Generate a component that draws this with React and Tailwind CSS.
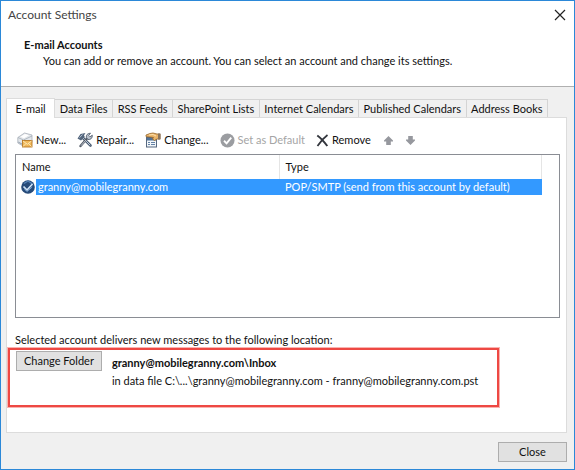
const TABS = [
  "E-mail",
  "Data Files",
  "RSS Feeds",
  "SharePoint Lists",
  "Internet Calendars",
  "Published Calendars",
  "Address Books",
];

function NewIcon() {
  return (
    <svg width="16" height="16" viewBox="0 0 16 16" aria-hidden="true">
      <path d="M.8 5.500 7.500 1l7.500 2v7.500L6 14 .8 11z" fill="#e3e6ea" stroke="#a9b0b9" strokeWidth=".8" />
      <path d="m1 5.500 5.500 2.500L15 4" fill="none" stroke="#a3adb8" strokeWidth=".8" />
      <path d="m3.500 4.700 4.500-2.700 4 1.200-5 3z" fill="#fff" />
      <path d="m1.300 9.500 4.200 2.200V13l-4.200-2.200z" fill="#9aa6b4" />
      <rect x="5.500" y="8.500" width="9.500" height="6.500" fill="#f0b95b" stroke="#b87925" strokeWidth=".9" />
      <path d="m6 9 4.300 3.300L14.500 9M6 14.500l3-3M14.500 14.500l-3-3" fill="none" stroke="#fff1c9" strokeWidth=".8" />
    </svg>
  );
}

function RepairIcon() {
  return (
    <svg width="16" height="16" viewBox="0 0 16 16" aria-hidden="true">
      <path d="m5 5 8.500 8.500" stroke="#4b5d73" strokeWidth="2.600" strokeLinecap="round" />
      <path d="m5.500 5.500 7.700 7.700" stroke="#c3cddb" strokeWidth="1" />
      <path d="M.5 6.500 3.500 2l5-1-1.500 2.200.8 1.800L4 8.500z" fill="#53657c" />
      <path d="m2.500 5.700 3-3.200" stroke="#b7c5d6" />
      <path d="M10.500 6 3.500 14" stroke="#525a66" strokeWidth="2.400" strokeLinecap="round" />
      <path d="M9 8 4 13.700" stroke="#cdd3dc" strokeWidth=".9" />
      <path d="M9.300 5.500C9 3 10.500 1.200 13.500 1.200L11.700 3.400l1.300 1.400 2.300-1.600c.3 2.800-1.700 4.800-4.300 4.300z" fill="#b8c1cd" stroke="#566172" strokeWidth=".9" />
    </svg>
  );
}

function ChangeIcon() {
  return (
    <svg width="16" height="16" viewBox="0 0 16 16" aria-hidden="true">
      <rect x="1.500" y="5.500" width="10" height="9.500" fill="#f2f6fa" stroke="#55677f" />
      <path d="M2 6h9v2.500H2z" fill="#4f7197" />
      <path d="M3 10.500h2M3 12.500h2M6 10.500h4M6 12.500h4" stroke="#6482a5" />
      <path d="m1 3 4-1.500 3-.5 4 1h3v5h-3L9.500 8.500 7.500 7l1-1.500L5 5l-4-.5z" fill="#e9b46a" stroke="#98672b" strokeWidth=".8" />
      <path d="m4 3 4-.5 3 1.500" fill="none" stroke="#ffe1ac" />
      <path d="M13 1.500h2.500v6H13z" fill="#88735d" />
    </svg>
  );
}

function CheckBadge() {
  return (
    <svg width="15" height="15" viewBox="0 0 16 16" aria-hidden="true">
      <circle cx="8" cy="8" r="7.500" fill="#9b9da1" />
      <path d="m4.300 8.300 2.700 2.700 5-6" fill="none" stroke="#fff" strokeWidth="2" />
    </svg>
  );
}

function AccountIcon() {
  return (
    <svg width="14" height="14" viewBox="0 0 14 14" className="block" aria-hidden="true">
      <circle cx="7" cy="7" r="6.800" fill="#274b79" />
      <path d="M3 3.500 7 1l4.500 3" fill="none" stroke="#5784b8" strokeWidth="1.200" />
      <path d="m2.500 6.500 3.500 3.500 5.500-6" fill="none" stroke="#cfe2f6" strokeWidth="1.700" />
      <path d="m3.500 9.500 2.700 2 5-4.500" fill="none" stroke="#6f9bcb" strokeWidth="1" />
    </svg>
  );
}

function RemoveIcon() {
  return (
    <svg width="13" height="13" viewBox="0 0 12 13" aria-hidden="true">
      <path d="M.8 1.500c3.500 2.500 7 6.500 10 10.500" fill="none" stroke="#33363d" strokeWidth="2" />
      <path d="M11 1C7 4 4 7.500 1 12" fill="none" stroke="#33363d" strokeWidth="1.700" />
    </svg>
  );
}

function ArrowIcon({ down }) {
  return (
    <svg width="9" height="9" viewBox="0 0 9 9" className={down ? "block rotate-180" : "block"} aria-hidden="true">
      <path d="M4.500 0 9 4.500V5.500H6.800V9H2.200V5.500H0v-1z" fill="#96989e" />
    </svg>
  );
}

function ToolButton({ icon, children, disabled }) {
  return (
    <button type="button" disabled={disabled} className="flex items-center gap-[3px] whitespace-nowrap disabled:text-[#a5a5a5]">
      {icon}
      {children}
    </button>
  );
}

export default function App() {
  return (
    <main className="flex min-h-screen flex-col border border-[#2b88d8] bg-[#f0f0f0] font-[Lato,'Noto_Sans',sans-serif] text-[11px] leading-4 text-[#111]">
      <header className="border-b border-[#b0b0b0] bg-white pb-[17px]">
        <div className="flex items-center justify-between pt-1 pr-2 pl-[7px]">
          <h1 className="text-xs leading-5 text-[#444]">Account Settings</h1>
          <button type="button" aria-label="Close window">
            <svg width="12" height="12" viewBox="0 0 12 12" aria-hidden="true">
              <path d="m1 1 10 10M11 1 1 11" stroke="#222" strokeWidth="1.200" />
            </svg>
          </button>
        </div>
        <h2 className="mt-3 pl-[23px] font-bold">E-mail Accounts</h2>
        <p className="pl-[42px]">You can add or remove an account. You can select an account and change its settings.</p>
      </header>

      <div className="flex flex-1 flex-col pt-[11px] pr-[7px] pb-[7px] pl-[5px]">
        <div role="tablist" className="flex items-end pr-[19px]">
          {TABS.map((tab, i) => (
            <button
              key={tab}
              type="button"
              role="tab"
              aria-selected={i === 0}
              className={
                i === 0
                  ? "relative -mb-px h-5 grow border border-b-0 border-[#dcdcdc] bg-white px-2 leading-4 whitespace-nowrap"
                  : "h-[18px] grow border-t border-r border-[#d4d4d4] px-1 leading-4 whitespace-nowrap"
              }
            >
              {tab}
            </button>
          ))}
        </div>

        <section className="flex flex-1 flex-col border border-[#dcdcdc] bg-white pb-[25px]">
          <div className="flex h-9 items-center gap-[11px] pt-2 pl-[10px]">
            <ToolButton icon={<NewIcon />}>New...</ToolButton>
            <ToolButton icon={<RepairIcon />}>Repair...</ToolButton>
            <ToolButton icon={<ChangeIcon />}>Change...</ToolButton>
            <ToolButton disabled icon={<CheckBadge />}>Set as Default</ToolButton>
            <ToolButton icon={<RemoveIcon />}>Remove</ToolButton>
            <button type="button" disabled aria-label="Move up" className="px-[2px]"><ArrowIcon /></button>
            <button type="button" disabled aria-label="Move down"><ArrowIcon down /></button>
          </div>

          <div className="mr-[6px] ml-2 flex-1 border border-[#8a8d94] pr-[17px]">
            <table className="w-full table-fixed border-collapse text-left">
              <colgroup>
                <col className="w-5" />
                <col className="w-[243px]" />
                <col />
              </colgroup>
              <thead>
                <tr className="h-6">
                  <th colSpan={2} className="border-r border-[#e5e5e5] pl-[6px] font-normal">Name</th>
                  <th className="border-r border-[#e5e5e5] pl-[6px] font-normal">Type</th>
                </tr>
              </thead>
              <tbody>
                <tr>
                  <td className="pl-[5px]"><AccountIcon /></td>
                  <td className="bg-[#3399ff] pl-[2px] text-white">granny@mobilegranny.com</td>
                  <td className="bg-[#3399ff] pl-[6px] text-white">POP/SMTP (send from this account by default)</td>
                </tr>
              </tbody>
            </table>
          </div>

          <p className="mt-[14px] pl-2">Selected account delivers new messages to the following location:</p>
          <div className="mr-[67px] ml-px flex h-[59px] items-start gap-[10px] border-2 border-[#ee4843] pt-px pl-[6px] outline outline-[#f9b3b0]">
            <button type="button" className="h-5 border border-[#adadad] bg-[#e1e1e1] px-[7px] leading-[18px] whitespace-nowrap">
              Change Folder
            </button>
            <div className="flex flex-col gap-[2px] pt-1">
              <strong>granny@mobilegranny.com\Inbox</strong>
              <span>in data file C:\...\granny@mobilegranny.com - franny@mobilegranny.com.pst</span>
            </div>
          </div>
        </section>

        <footer className="flex justify-end pt-[9px]">
          <button type="button" className="h-5 w-[69px] border border-[#adadad] bg-[#e1e1e1] leading-[18px]">Close</button>
        </footer>
      </div>
    </main>
  );
}
